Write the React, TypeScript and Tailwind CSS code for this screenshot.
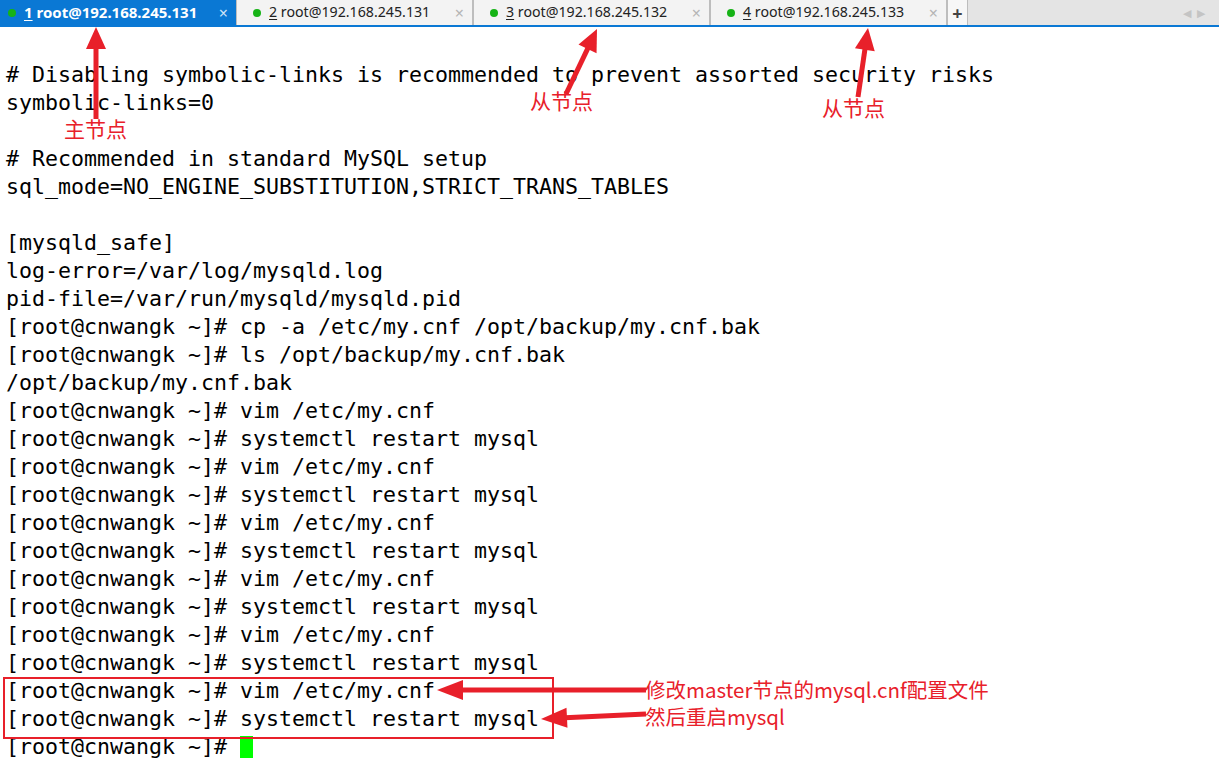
import React from "react";

const tabs = [
  { n: "1", host: "192.168.245.131" },
  { n: "2", host: "192.168.245.131" },
  { n: "3", host: "192.168.245.132" },
  { n: "4", host: "192.168.245.133" },
];

const prompt = "[root@cnwangk ~]# ";

const lines: string[] = [
  "# Disabling symbolic-links is recommended to prevent assorted security risks",
  "symbolic-links=0",
  "",
  "# Recommended in standard MySQL setup",
  "sql_mode=NO_ENGINE_SUBSTITUTION,STRICT_TRANS_TABLES",
  "",
  "[mysqld_safe]",
  "log-error=/var/log/mysqld.log",
  "pid-file=/var/run/mysqld/mysqld.pid",
  prompt + "cp -a /etc/my.cnf /opt/backup/my.cnf.bak",
  prompt + "ls /opt/backup/my.cnf.bak",
  "/opt/backup/my.cnf.bak",
  ...Array.from({ length: 6 }).flatMap(() => [prompt + "vim /etc/my.cnf", prompt + "systemctl restart mysql"]),
];

const RED = "#e8202a";

// arrow: line from tail to tip with a triangle head at tip
const Arrow = ({ x1, y1, x2, y2, w = 5, head = 22, half = 10 }: { x1: number; y1: number; x2: number; y2: number; w?: number; head?: number; half?: number }) => {
  const dx = x2 - x1;
  const dy = y2 - y1;
  const len = Math.hypot(dx, dy);
  const ux = dx / len;
  const uy = dy / len;
  const bx = x2 - ux * head;
  const by = y2 - uy * head;
  const px = -uy;
  const py = ux;
  return (
    <g>
      <line x1={x1} y1={y1} x2={bx + ux * 2} y2={by + uy * 2} stroke={RED} strokeWidth={w} />
      <polygon points={`${x2},${y2} ${bx + px * half},${by + py * half} ${bx - px * half},${by - py * half}`} fill={RED} />
    </g>
  );
};

const TabBar = () => (
  <div className="flex h-[27px] border-b-2 border-[#0a78d4] bg-[#e4e4e4] font-['Noto_Sans',sans-serif] leading-none">
    {tabs.map((t, i) => {
      const active = i === 0;
      return (
        <div
          key={t.n}
          className={
            active
              ? "flex h-[25px] w-[236px] items-center bg-[#0a78d4] pl-[8px] pr-[8px] text-[15px] font-bold text-white"
              : "flex h-[25px] w-[237px] items-center border-x border-[#bdbdbd] bg-[#f3f3f3] pl-[16px] pr-[8px] text-[14.2px] text-[#222]"
          }
        >
          <span className="mr-[8px] h-[8px] w-[8px] rounded-full bg-[#16b316]" />
          <span className="whitespace-nowrap">
            <span className="underline underline-offset-2">{t.n}</span> root@{t.host}
          </span>
          <span className={`ml-auto text-[16px] font-normal ${active ? "text-[#cfe4f7]" : "text-[#b5b5b5]"}`}>×</span>
        </div>
      );
    })}
    <div className="flex h-[25px] w-[21px] items-center justify-center border-x border-[#bdbdbd] bg-[#f7f7f7] text-[18px] font-bold text-[#444]">+</div>
    <div className="ml-auto flex items-center gap-[6px] pr-[14px] text-[11px] text-[#c4c4c4]">
      <span>◀</span>
      <span>▶</span>
    </div>
  </div>
);

export default function App() {
  return (
    <div className="relative h-[776px] w-[1219px] overflow-hidden bg-white">
      <TabBar />
      <div className="pl-[6px] pt-[34px] font-['DejaVu_Sans_Mono',monospace] text-[21.6px] leading-[28px] text-black">
        {lines.map((l, i) => (
          <div key={i} className="h-[28px] whitespace-pre">
            {l}
          </div>
        ))}
        <div className="flex h-[28px] items-center whitespace-pre">
          {prompt}
          <span className="h-[22px] w-[13px] bg-[#00ff00]" />
        </div>
      </div>

      {/* annotations */}
      <svg className="pointer-events-none absolute left-0 top-0" width={1219} height={776}>
        <Arrow x1={96} y1={119} x2={96} y2={27} w={5} head={22} half={10} />
        <Arrow x1={566} y1={94} x2={597} y2={29} w={5} head={22} half={10} />
        <Arrow x1={858} y1={97} x2={868} y2={28} w={5} head={22} half={10} />
        <Arrow x1={646} y1={690} x2={437} y2={690} w={5} head={26} half={10} />
        <Arrow x1={646} y1={714} x2={541} y2={719} w={5} head={26} half={10} />
        <rect x={4} y={678} width={549} height={60} fill="none" stroke={RED} strokeWidth={2} />
      </svg>
      <div className="pointer-events-none absolute left-[64px] top-[118px] font-['Noto_Sans_CJK_SC',sans-serif] text-[21px] leading-none text-[#e8202a]">主节点</div>
      <div className="pointer-events-none absolute left-[530px] top-[90px] font-['Noto_Sans_CJK_SC',sans-serif] text-[21px] leading-none text-[#e8202a]">从节点</div>
      <div className="pointer-events-none absolute left-[822px] top-[97px] font-['Noto_Sans_CJK_SC',sans-serif] text-[21px] leading-none text-[#e8202a]">从节点</div>
      <div className="pointer-events-none absolute left-[645px] top-[679px] whitespace-nowrap font-['Noto_Sans_CJK_SC',sans-serif] text-[20.5px] leading-[21px] text-[#e8202a]">修改master节点的mysql.cnf配置文件</div>
      <div className="pointer-events-none absolute left-[645px] top-[706px] whitespace-nowrap font-['Noto_Sans_CJK_SC',sans-serif] text-[20.5px] leading-[21px] text-[#e8202a]">然后重启mysql</div>
    </div>
  );
}
